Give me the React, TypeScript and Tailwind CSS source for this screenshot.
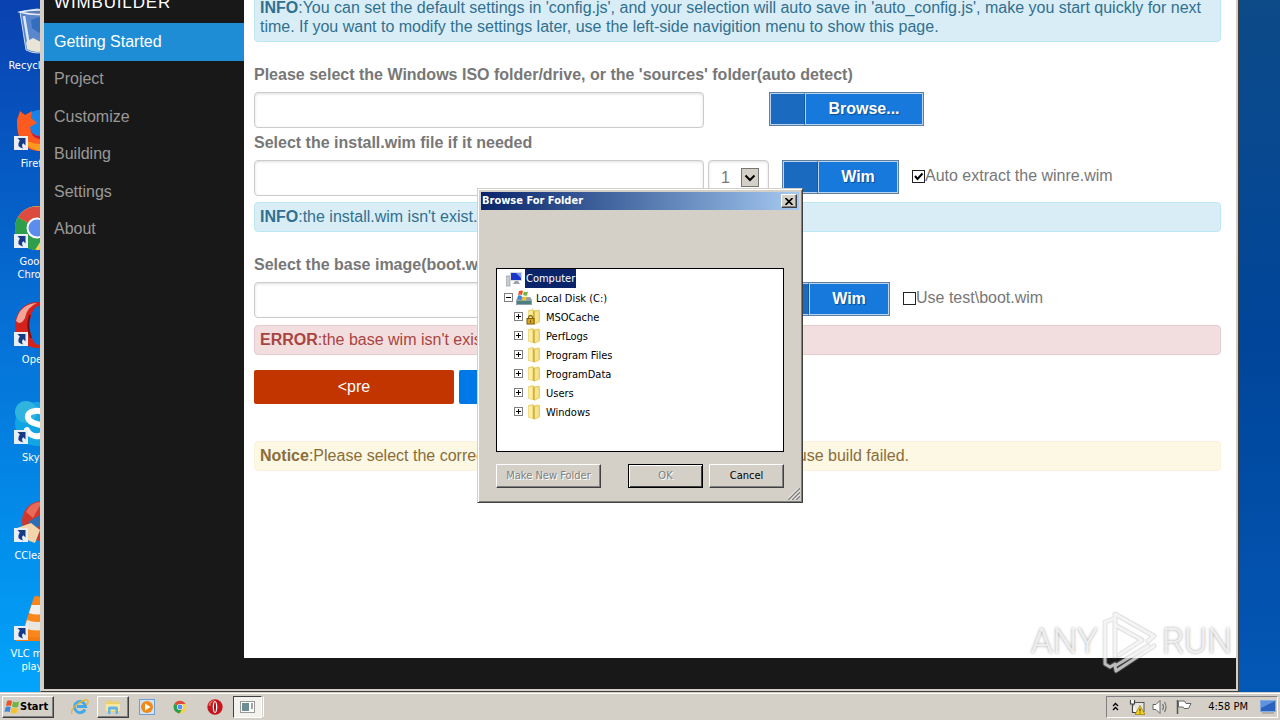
import { ReactNode } from 'react';
import clsx from 'clsx';

const menu = ['Getting Started', 'Project', 'Customize', 'Building', 'Settings', 'About'];
const folders = ['MSOCache', 'PerfLogs', 'Program Files', 'ProgramData', 'Users', 'Windows'];

const raised =
  'border border-t-white border-l-white border-r-[#404040] border-b-[#404040] bg-[#d4d0c8] shadow-[inset_-1px_-1px_0_#808080]';

/* ---------- desktop icons ---------- */

function RecycleBin() {
  return (
    <svg viewBox="0 0 48 48" className="size-12">
      <path d="M7 4 L24 1 L42 4 L37 42 Q24 48 13 42 Z" fill="#8fb2dc" fillOpacity=".6" stroke="#c9d8ea" />
      <path d="M7 4 Q24 0 42 4 Q24 9 7 4Z" fill="#5b7fb5" stroke="#e4edf6" strokeWidth="1.5" />
      <path d="M11 8 L16 38" stroke="#dce8f5" strokeWidth="2.5" />
      <path d="M18 12 L26 9 L33 18 L26 25 L19 20Z" fill="#2563b8" fillOpacity=".7" />
      <path d="M13 34 L20 30 L28 34 L37 31 L36 41 Q24 47 14 41Z" fill="#e8e4d8" />
    </svg>
  );
}

function Firefox() {
  return (
    <svg viewBox="0 0 48 48" className="size-12">
      <circle cx="27" cy="22" r="18" fill="#1583e8" />
      <path d="M4 14 L7 5 L12 9 L19 5 L18 12 L24 17 L17 21 Q18 31 29 30 Q39 29 41 18 Q50 44 25 45 Q3 43 4 14Z" fill="#ff5a1f" />
      <path d="M7 30 Q12 42 26 45 Q40 44 44 28 Q34 41 20 37 Q12 35 7 30Z" fill="#ff9a1c" />
      <path d="M17 21 Q18 31 29 30 L32 33 Q18 35 17 21Z" fill="#c81d3c" />
    </svg>
  );
}

function Chrome({ className }: { className: string }) {
  return (
    <svg viewBox="0 0 48 48" className={className}>
      <circle cx="24" cy="24" r="22" fill="#fbd043" />
      <path d="M24 24 L4.9 13 A22 22 0 0 0 22 46 L33 29Z" fill="#2d9f4c" />
      <path d="M24 24 L4.9 13 A22 22 0 0 1 43.1 14 L24 14Z" fill="#dd4b3e" />
      <circle cx="24" cy="24" r="10.5" fill="#fff" />
      <circle cx="24" cy="24" r="8.5" fill="#5b8def" />
    </svg>
  );
}

function Opera({ className }: { className: string }) {
  return (
    <svg viewBox="0 0 48 48" className={className}>
      <circle cx="24" cy="24" r="23" fill="#c4161c" />
      <path d="M4 18 Q10 2 25 3 Q12 8 11 20 Q7 22 4 18Z" fill="#e4695c" />
      <ellipse cx="24" cy="24" rx="7" ry="18" fill="#fff" />
      <ellipse cx="24" cy="24" rx="3" ry="15" fill="#a51318" />
    </svg>
  );
}

function DesktopOpera() {
  return (
    <svg viewBox="0 0 48 48" className="size-12">
      <path fillRule="evenodd" d="M24 0 A22 23 0 0 0 24 46 A22 23 0 0 0 24 0Z M26 4 A9 19 0 0 1 26 43 A9 19 0 0 1 26 4Z" fill="#d3231c" />
      <path d="M3 19 Q7 2 24 1 Q14 5 12 16 Q8 24 3 19Z" fill="#f4a398" />
      <path d="M17 13 Q13 24 18 36" stroke="#7d0d10" strokeWidth="2" fill="none" />
    </svg>
  );
}

function Skype() {
  return (
    <svg viewBox="0 0 48 48" className="size-12">
      <circle cx="24" cy="24" r="22" fill="#12a5e6" />
      <circle cx="13" cy="12" r="11" fill="#2fb4df" />
      <path d="M34 16 Q30 10 22 11 Q14 12 15 18 Q16 22 24 24 Q33 26 32 31 Q30 37 22 36 Q16 35 14 30" stroke="#fff" strokeWidth="6" fill="none" strokeLinecap="round" />
    </svg>
  );
}

function CCleaner() {
  return (
    <svg viewBox="0 0 48 48" className="size-12">
      <circle cx="29" cy="23" r="20" fill="#d3372c" />
      <path d="M13 14 Q18 4 29 4 L20 20Z" fill="#e96a58" />
      <path d="M15 24 L32 14 L34 20 L22 32Z" fill="#2f6db3" />
      <path d="M4 30 L18 25 L27 32 L22 45 Q10 42 4 30Z" fill="#f2d5ab" />
    </svg>
  );
}

function Vlc() {
  return (
    <svg viewBox="0 0 48 48" className="size-12">
      <path d="M8 34 L40 34 L46 45 L3 45Z" fill="#f47b10" />
      <path d="M21 1 Q24 -1 27 1 L39 38 Q24 45 9 38Z" fill="#f8861b" />
      <path d="M18.500 9 L29.500 9 L32 17 Q24 20 16 17Z" fill="#f3f0ec" />
      <path d="M14 24 Q24 28 34 24 L37 32 Q24 37 11.500 32Z" fill="#e9e6e1" />
    </svg>
  );
}

function ShortcutArrow() {
  return (
    <svg viewBox="0 0 14 14" className="absolute bottom-1 left-px size-[14px]">
      <rect width="14" height="14" fill="#e9eef5" />
      <path d="M3.500 2 L11.500 2 L11.500 9.500 L9.300 7.300 Q7 9 9 12.500 Q1.500 10.500 5.800 4.500Z" fill="#173a86" />
    </svg>
  );
}

const shortcuts: { label: string[]; icon: ReactNode; link: boolean }[] = [
  { label: ['Recycle Bin'], icon: <RecycleBin />, link: false },
  { label: ['Firefox'], icon: <Firefox />, link: true },
  { label: ['Google', 'Chrome'], icon: <Chrome className="size-12" />, link: true },
  { label: ['Opera'], icon: <DesktopOpera />, link: true },
  { label: ['Skype'], icon: <Skype />, link: true },
  { label: ['CCleaner'], icon: <CCleaner />, link: true },
  { label: ['VLC media', 'player'], icon: <Vlc />, link: true },
];

function DesktopColumn() {
  return (
    <div className="flex w-10 shrink-0 flex-col overflow-hidden bg-linear-to-b from-[#0a41b0] via-[#0673d8] to-[#04a4fb]">
      {shortcuts.map((s) => (
        <div key={s.label[0]} className="flex h-[98px] w-[74px] shrink-0 flex-col items-center pt-2">
          <div className="relative">
            {s.icon}
            {s.link && <ShortcutArrow />}
          </div>
          <div className="pt-[3px] text-center leading-[13px] whitespace-nowrap text-white">
            {s.label.map((l) => (
              <div key={l}>{l}</div>
            ))}
          </div>
        </div>
      ))}
    </div>
  );
}

/* ---------- WimBuilder window ---------- */

function Sidebar() {
  return (
    <nav className="w-[200px] shrink-0 text-base">
      <div className="flex h-[23px] items-end overflow-hidden pb-[10px] pl-[10px] text-[17px] leading-5 tracking-wider text-white">
        WIMBUILDER
      </div>
      <ul className="grid h-[225px] grid-rows-6">
        {menu.map((m, i) => (
          <li key={m} className="flex">
            <a
              href="#"
              className={clsx('flex flex-1 items-center pl-[10px]', i === 0 ? 'bg-[#1f8dd6] text-white' : 'text-[#999999]')}
            >
              {m}
            </a>
          </li>
        ))}
      </ul>
    </nav>
  );
}

function Alert({ className, children }: { className: string; children: ReactNode }) {
  return <div className={clsx('rounded border px-[5px] pt-1 pb-[5px] leading-[19px]', className)}>{children}</div>;
}

function PathInput({ id }: { id: string }) {
  return (
    <input
      id={id}
      type="text"
      className="h-9 w-[450px] shrink-0 rounded border border-[#cccccc] bg-white px-2 shadow-[inset_0_1px_3px_#dddddd] outline-none"
    />
  );
}

function BlueButton({ className, children }: { className: string; children: ReactNode }) {
  return (
    <button
      type="button"
      className={clsx('flex h-[34px] shrink-0 border border-[#5f7f9f] bg-[#1779dc] font-bold text-white', className)}
    >
      <span className="h-full w-[35px] border border-r-[#1557a5] border-[#b9d3ee] bg-[#1a6bbf]" />
      <span className="flex h-full flex-1 items-center justify-center border border-[#b9d3ee] pb-px [text-shadow:1px_1px_1px_#0b4c94]">
        {children}
      </span>
    </button>
  );
}

function Tick({ id, checked, children }: { id: string; checked?: boolean; children: ReactNode }) {
  return (
    <label htmlFor={id} className="flex h-8 items-center whitespace-nowrap">
      <span className="relative flex size-[13px]">
        <input id={id} type="checkbox" defaultChecked={checked} className="peer size-[13px] appearance-none border border-[#222222] bg-white" />
        <svg viewBox="0 0 13 13" className="pointer-events-none absolute inset-0 hidden size-[13px] peer-checked:block">
          <path d="M3 6 L5.500 9 L10.500 3.500" stroke="#000" strokeWidth="2" fill="none" />
        </svg>
      </span>
      {children}
    </label>
  );
}

function SetupPage() {
  return (
    <main className="mb-[31px] flex min-w-0 flex-1 flex-col overflow-hidden bg-white pr-[15px] pl-[10px] text-base text-[#777777]">
      {/* scrolled down by a few pixels */}
      <Alert className="-mt-[7px] border-[#bce8f1] bg-[#d9edf7] text-[#31708f]">
        <b>INFO</b>:You can set the default settings in 'config.js', and your selection will auto save in 'auto_config.js', make you start quickly for next
        time. If you want to modify the settings later, use the left-side navigition menu to show this page.
      </Alert>

      <label htmlFor="iso" className="mt-[23px] leading-5 font-bold">
        Please select the Windows ISO folder/drive, or the 'sources' folder(auto detect)
      </label>
      <div className="mt-[7px] flex items-start">
        <PathInput id="iso" />
        <BlueButton className="ml-[65px] w-[155px]">Browse...</BlueButton>
      </div>

      <label htmlFor="install" className="mt-[5px] leading-5 font-bold">
        Select the install.wim file if it needed
      </label>
      <div className="mt-[7px] flex items-start">
        <PathInput id="install" />
        <div className="relative ml-1 h-9 w-[61px]">
          <select
            aria-label="Image index"
            className="size-full appearance-none rounded border border-[#cccccc] bg-white pl-3 shadow-[inset_0_1px_3px_#dddddd]"
          >
            <option>1</option>
          </select>
          <span className="pointer-events-none absolute top-2 right-[10px] flex h-[19px] w-[18px] items-center justify-center border border-[#777777] bg-[#d4d0c8]">
            <svg viewBox="0 0 12 8" className="h-2 w-3">
              <path d="M1.500 1.500 L6 6 L10.500 1.500" stroke="#000" strokeWidth="2" fill="none" />
            </svg>
          </span>
        </div>
        <BlueButton className="mr-[13px] ml-[13px] w-[117px]">Wim</BlueButton>
        <Tick id="winre" checked>
          Auto extract the winre.wim
        </Tick>
      </div>
      <Alert className="mt-[6px] border-[#bce8f1] bg-[#d9edf7] text-[#31708f]">
        <b>INFO</b>:the install.wim isn't exist.
      </Alert>

      <label htmlFor="base" className="mt-[23px] leading-5 font-bold">
        Select the base image(boot.wim)
      </label>
      <div className="mt-[7px] flex items-start">
        <PathInput id="base" />
        <BlueButton className="mr-[13px] ml-[69px] w-[117px]">Wim</BlueButton>
        <Tick id="testboot">Use test\boot.wim</Tick>
      </div>
      <Alert className="mt-[7px] border-[#e5ccd1] bg-[#f2dede] text-[#a94442]">
        <b>ERROR</b>:the base wim isn't exist.
      </Alert>

      <div className="mt-[15px] flex gap-[5px]">
        <button type="button" className="h-[34px] w-[200px] rounded-xs bg-[#c23400] text-white">
          &lt;pre
        </button>
        <button type="button" className="h-[34px] w-[200px] rounded-xs bg-[#0078e7] text-white">
          next&gt;
        </button>
      </div>

      <Alert className="mt-[37px] flex justify-between border-[#faf2dc] bg-[#fcf8e3] text-[#8a6d3b]">
        <span>
          <b>Notice</b>:Please select the correct image,
        </span>
        <span className="pr-[306px]">or it will cause build failed.</span>
      </Alert>
    </main>
  );
}

/* ---------- folder dialog ---------- */

function Expander({ open }: { open?: boolean }) {
  return (
    <svg viewBox="0 0 9 9" className="size-[9px] shrink-0">
      <rect x=".5" y=".5" width="8" height="8" fill="#fff" stroke="#808080" />
      <path d={open ? 'M2 4.500 H7' : 'M2 4.500 H7 M4.500 2 V7'} stroke="#000" />
    </svg>
  );
}

function FolderIcon({ locked }: { locked: boolean }) {
  return (
    <svg viewBox="0 0 16 16" className="size-4 shrink-0">
      <path d="M2 1.500 L7 0 L8 1.500 L13 0.500 L14 2 L14 13 L9 15.500 L2 13.500Z" fill="#e9cf68" />
      <path d="M2.500 2.500 L6.500 1.500 L6.500 14 L2.500 13Z" fill="#fbeea6" />
      <path d="M9 3 L12.500 2 L12.500 12.500 L9 14.500Z" fill="#f6e38a" />
      <path d="M7 1.500 L8.500 2.500 L8.500 15.500 L7 14.500Z" fill="#d0ae40" />
      {locked && (
        <>
          <path d="M2.500 10 V8 Q4.500 5 6.500 8 V10" stroke="#8a6a10" strokeWidth="1.300" fill="none" />
          <rect x="1" y="9.500" width="7" height="5.500" fill="#d9a520" stroke="#7a5c0c" />
          <path d="M4.500 11.500 V13.500" stroke="#513b04" />
        </>
      )}
    </svg>
  );
}

function BrowseDialog() {
  return (
    <div
      role="dialog"
      aria-label="Browse For Folder"
      className="absolute top-[188px] left-[477px] w-[326px] border border-t-[#d4d0c8] border-r-[#404040] border-b-[#404040] border-l-[#d4d0c8] bg-[#d4d0c8] p-[3px] text-black shadow-[inset_1px_1px_0_#fff,inset_-1px_-1px_0_#808080]"
    >
      <div className="flex h-[18px] items-center justify-between bg-linear-to-r from-[#0a246a] to-[#a6caf0] pr-[2px] pl-px">
        <h2 className="font-bold text-white">Browse For Folder</h2>
        <button type="button" aria-label="Close" className={clsx('flex h-[14px] w-4 items-center justify-center', raised)}>
          <svg viewBox="0 0 8 7" className="h-[7px] w-2">
            <path d="M.5 0 L7.500 7 M7.500 0 L.5 7" stroke="#000" strokeWidth="1.600" />
          </svg>
        </button>
      </div>

      <div className="px-[15px] pt-[58px] pb-[11px]">
        <ul className="h-[184px] border border-black bg-white pl-[7px] leading-[17px]">
          <li className="flex h-[19px] items-center pl-[2px]">
            <svg viewBox="0 0 16 16" className="size-4">
              <rect x="0" y="5" width="4" height="10" fill="#c9ccd2" stroke="#8b9099" strokeWidth=".6" />
              <rect x="4" y="1" width="12" height="9" fill="#d5d9e0" />
              <rect x="5" y="2" width="10" height="7" fill="#1d34c9" />
              <path d="M10 2 H15 V7Z" fill="#7c9af0" />
              <path d="M7 13 L9 10 H12 L14 13Z" fill="#9aa2ae" />
            </svg>
            <span className="ml-[3px] bg-[#0a246a] px-px pt-px leading-[18px] text-white">Computer</span>
          </li>
          <li className="flex h-[19px] items-center">
            <Expander open />
            <svg viewBox="0 0 16 16" className="mr-1 ml-[3px] size-4">
              <path d="M0 10 L3 7 H14 L16 10 V15 H0Z" fill="#8fa3a8" />
              <rect x="1" y="11" width="14" height="3" fill="#4d7f80" />
              <path d="M3 1 Q5 0 7 1 L6 5 Q4 4 2 5Z" fill="#e8552b" />
              <path d="M8 1.500 Q10 2.500 12 1.500 L11 5.500 Q9 6 7 5Z" fill="#6fb53f" />
              <path d="M2 5.500 Q4 5 6 6 L5 10 Q3 9 1 9.500Z" fill="#3e86d8" />
              <path d="M7 6.500 Q9 7 11 6.500 L10 10 Q8 11 6 10Z" fill="#f4c32c" />
            </svg>
            <span className="pt-px">Local Disk (C:)</span>
          </li>
          {folders.map((f) => (
            <li key={f} className="flex h-[19px] items-center pl-[10px]">
              <Expander />
              <span className="mr-1 ml-[3px]">
                <FolderIcon locked={f === 'MSOCache'} />
              </span>
              <span className="pt-px">{f}</span>
            </li>
          ))}
        </ul>
        <div className="mt-3 flex">
          <button type="button" disabled className={clsx('h-6 w-[105px] text-[#808080] [text-shadow:1px_1px_0_#fff]', raised)}>
            Make New Folder
          </button>
          <div className="ml-auto flex gap-[6px]">
            <button
              type="button"
              disabled
              className="h-6 w-[75px] border border-black bg-[#d4d0c8] text-[#808080] shadow-[inset_1px_1px_0_#fff,inset_-1px_-1px_0_#404040] [text-shadow:1px_1px_0_#fff]"
            >
              OK
            </button>
            <button type="button" className={clsx('h-6 w-[75px]', raised)}>
              Cancel
            </button>
          </div>
        </div>
      </div>
      <svg viewBox="0 0 12 12" className="absolute right-[2px] bottom-[2px] size-3">
        <path d="M0 12 L12 0 M4 12 L12 4 M8 12 L12 8" stroke="#808080" strokeWidth="1.500" />
        <path d="M-1.500 12 L12 -1.500 M2.500 12 L12 2.500 M6.500 12 L12 6.500" stroke="#fff" strokeWidth=".8" />
      </svg>
    </div>
  );
}

function Watermark() {
  return (
    <div className="pointer-events-none absolute right-12 bottom-[46px] flex items-center gap-1 font-[Roboto,sans-serif] text-[35px] leading-[64px] font-light text-white/75 [text-shadow:0_0_3px_#999999]">
      <span>ANY</span>
      <svg viewBox="0 0 56 64" className="h-16 w-14">
        <g fill="none" strokeLinejoin="round" strokeLinecap="round">
          <path
            d="M11 9 L3 12 V54 L8 57 L13 54 M13 46 V4 L52 26 L46 31 M13 15 L40 30 L17 45 M14 61 L52 36 M14 61 L13 56 L46 36"
            stroke="#999999"
            strokeOpacity=".3"
            strokeWidth="5"
          />
          <path
            d="M11 9 L3 12 V54 L8 57 L13 54 M13 46 V4 L52 26 L46 31 M13 15 L40 30 L17 45 M14 61 L52 36 M14 61 L13 56 L46 36"
            stroke="#fff"
            strokeOpacity=".65"
            strokeWidth="3"
          />
        </g>
      </svg>
      <span>RUN</span>
    </div>
  );
}

/* ---------- taskbar ---------- */

function Taskbar() {
  return (
    <footer className="flex h-7 shrink-0 items-center border-t border-[#d4d0c8] bg-[#d4d0c8] pr-[2px] pl-[2px] text-black shadow-[inset_0_1px_0_#fff]">
      <button type="button" className={clsx('flex h-[22px] w-[52px] items-center pl-px font-bold', raised)}>
        <svg viewBox="0 0 16 16" className="size-4">
          <path d="M3 2 Q5.500 .5 8 2 L7 7 Q4.500 6 2 7Z" fill="#e8552b" />
          <path d="M9 2.500 Q12 4 15 2.500 L14 8 Q11 9 8 7.500Z" fill="#6fb53f" />
          <path d="M1.700 8 Q4 7 6.700 8 L5.700 13 Q3 12 .5 13Z" fill="#3e86d8" />
          <path d="M7.700 8.500 Q10.500 10 13.700 9 L12.700 14 Q9.500 15 6.700 13.500Z" fill="#f4c32c" />
        </svg>
        Start
      </button>
      <div className="flex items-center">
        <button type="button" aria-label="Internet Explorer" className="ml-[17px] size-[18px]">
          <svg viewBox="0 0 18 18" className="size-[18px]">
            <path d="M14 11.500 A5.500 5.500 0 1 1 14.500 8.500 H6" stroke="#45a8e8" strokeWidth="3" fill="none" />
            <path d="M1 16 Q-1 11 8 5 Q16 0 17 3 Q17.500 4.500 15.500 7" stroke="#e8b62e" strokeWidth="1.300" fill="none" />
          </svg>
        </button>
        <button type="button" aria-label="Explorer" className={clsx('ml-2 flex h-[22px] w-8 items-center justify-center', raised)}>
          <svg viewBox="0 0 16 16" className="size-4">
            <path d="M1 3 L6 1 L7 2.500 H15 V13 H1Z" fill="#ecd06c" />
            <path d="M1 5 H15 V12 H1Z" fill="#f8e79f" />
            <path d="M3 15 V9 Q3 7.500 5 7.500 H11 Q13 7.500 13 9 V15 H10.500 V10.500 H5.500 V15Z" fill="#63b4e8" />
          </svg>
        </button>
        <button type="button" aria-label="Media Player" className="ml-[10px] size-4">
          <svg viewBox="0 0 16 16" className="size-4">
            <rect x=".5" y=".5" width="15" height="15" fill="#cfe3f5" stroke="#6d9fd0" />
            <circle cx="8" cy="8" r="6" fill="#f08a17" />
            <path d="M6 4.500 L11.500 8 L6 11.500Z" fill="#fff" />
          </svg>
        </button>
        <button type="button" aria-label="Chrome" className="ml-[18px] size-[14px]">
          <Chrome className="size-[14px]" />
        </button>
        <button type="button" aria-label="Opera" className="ml-5 size-4">
          <Opera className="size-4" />
        </button>
        <button
          type="button"
          aria-label="WimBuilder"
          className="ml-[10px] flex h-[22px] w-[29px] items-center justify-center border border-t-[#404040] border-r-white border-b-white border-l-[#404040] bg-[#f4f2ee]"
        >
          <svg viewBox="0 0 15 12" className="h-3 w-[15px]">
            <rect x=".5" y=".5" width="14" height="11" fill="#fff" stroke="#9a9a9a" />
            <rect x="2" y="2" width="7" height="8" fill="#6b8f93" />
            <path d="M11 3 H13 M11 5 H13 M11 7 H13" stroke="#444" />
          </svg>
        </button>
        <span className="ml-px h-5 w-px bg-white" />
      </div>

      <div className="ml-auto flex h-[22px] items-center border border-t-[#808080] border-r-white border-b-white border-l-[#808080] pr-px pl-[5px]">
        <svg viewBox="0 0 7 9" className="h-[9px] w-[7px]">
          <path d="M1 4 L3.500 1.500 L6 4 M1 8 L3.500 5.500 L6 8" stroke="#000" strokeWidth="1.300" fill="none" />
        </svg>
        <svg viewBox="0 0 16 16" className="ml-[10px] size-4">
          <rect x="4" y="3.500" width="11" height="9" fill="#e8e6e0" stroke="#555" />
          <path d="M1.500 1 V5 H5.500 V1 M3.500 5 V13.500 H8" stroke="#444" strokeWidth="1.200" fill="#fff" />
          <path d="M11 6.500 L16 15.500 H6Z" fill="#f6d21f" stroke="#8f7a10" strokeWidth=".7" />
          <path d="M11 9.500 V12.500 M11 13.500 V14.500" stroke="#222" />
        </svg>
        <svg viewBox="0 0 18 16" className="ml-[7px] h-4 w-[18px]">
          <path d="M1 5.500 H4 L8 1.500 V14.500 L4 10.500 H1Z" fill="#fff" stroke="#666" />
          <path d="M10.500 5 Q12.500 8 10.500 11 M12.500 3 Q15.500 8 12.500 13" stroke="#777" strokeWidth="1.200" fill="none" />
        </svg>
        <svg viewBox="0 0 16 16" className="ml-[6px] size-4">
          <path d="M1.500 1 V15" stroke="#555" strokeWidth="1.500" />
          <path d="M2.500 2 H8.500 L10 4.500 H15 L12.500 9.500 H8 L7 8 H2.500Z" fill="#fff" stroke="#666" />
        </svg>
        <time className="ml-4">4:58 PM</time>
        <svg viewBox="0 0 16 14" className="ml-3 h-[14px] w-4">
          <rect x=".5" y=".5" width="15" height="11" fill="#2a62bd" stroke="#84aade" />
          <path d="M1 1 H15 L1 8Z" fill="#5f93dd" />
          <path d="M2 13 H14" stroke="#8d8d8d" />
        </svg>
      </div>
    </footer>
  );
}

export default function App() {
  return (
    <div className="relative flex min-h-screen flex-col overflow-hidden font-['DejaVu_Sans_Condensed','DejaVu_Sans',sans-serif] text-[11px] leading-[14px]">
      <div className="flex flex-1">
        <DesktopColumn />
        <div className="flex min-w-0 flex-1 border-r border-b border-l border-r-[#404040] border-b-[#404040] border-l-[#d4d0c8]">
          <div className="flex min-w-0 flex-1 border-r-2 border-b-2 border-l-[3px] border-[#d4d0c8] bg-[#191818] font-['Liberation_Sans',Arial,sans-serif]">
            <Sidebar />
            <SetupPage />
          </div>
        </div>
        <div className="w-[41px] shrink-0 bg-linear-to-b from-[#0d4a88] via-[#00459a] to-[#0458b6]" />
      </div>
      <Taskbar />
      <BrowseDialog />
      <Watermark />
    </div>
  );
}
